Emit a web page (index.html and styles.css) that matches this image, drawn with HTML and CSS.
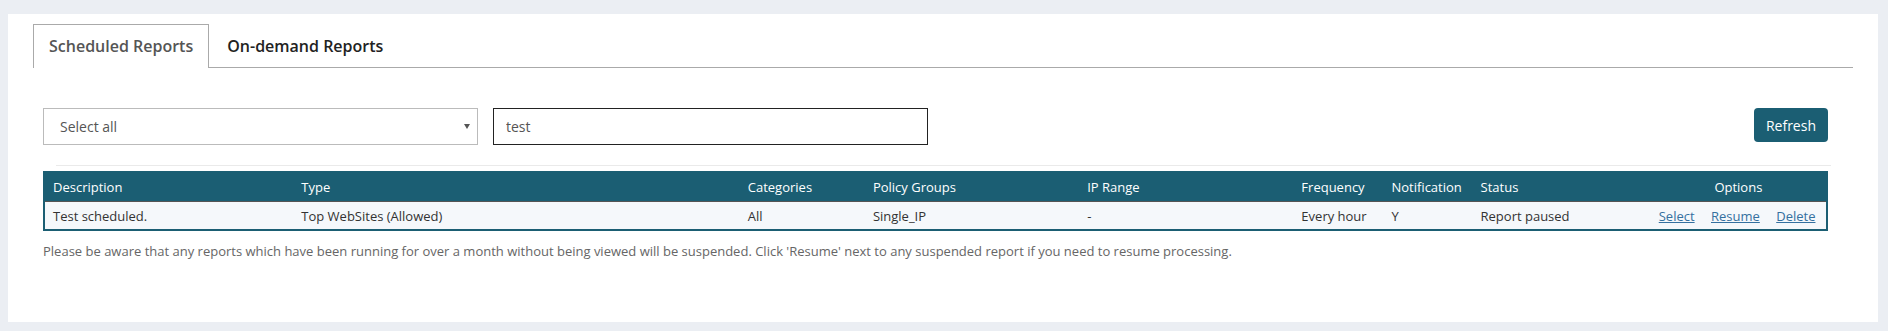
FILE: index.html
```html
<!DOCTYPE html>
<html lang="en">
<head>
    <meta charset="UTF-8">
    <meta name="viewport" content="width=device-width, initial-scale=1.0">
    <title>Reports</title>
    <link rel="stylesheet" href="styles.css">
</head>
<body>
    <div class="panel">
        <ul class="tabs">
            <li class="tab active">Scheduled Reports</li>
            <li class="tab">On-demand Reports</li>
        </ul>

        <div class="tab-content">
            <div class="filters">
                <div class="select-wrap">
                    <select class="field">
                        <option>Select all</option>
                    </select>
                </div>
                <input type="text" class="field search" value="test">
                <button class="btn">Refresh</button>
            </div>
            <hr class="sep">

            <table class="reports">
                <colgroup>
                    <col style="width: 249px">
                    <col style="width: 446px">
                    <col style="width: 125px">
                    <col style="width: 214px">
                    <col style="width: 214px">
                    <col style="width: 90px">
                    <col style="width: 89px">
                    <col style="width: 178px">
                    <col style="width: 176px">
                </colgroup>
                <thead>
                    <tr>
                        <th>Description</th>
                        <th>Type</th>
                        <th>Categories</th>
                        <th>Policy Groups</th>
                        <th>IP Range</th>
                        <th>Frequency</th>
                        <th>Notification</th>
                        <th>Status</th>
                        <th class="center">Options</th>
                    </tr>
                </thead>
                <tbody>
                    <tr>
                        <td>Test scheduled.</td>
                        <td>Top WebSites (Allowed)</td>
                        <td>All</td>
                        <td>Single_IP</td>
                        <td>-</td>
                        <td>Every hour</td>
                        <td>Y</td>
                        <td>Report paused</td>
                        <td class="options">
                            <a href="#">Select</a>
                            <a href="#">Resume</a>
                            <a href="#">Delete</a>
                        </td>
                    </tr>
                </tbody>
            </table>

            <p class="note">Please be aware that any reports which have been running for over a month without being viewed will be suspended. Click 'Resume' next to any suspended report if you need to resume processing.</p>
        </div>
    </div>
</body>
</html>
```

FILE: styles.css
```css
body {
    margin: 0;
    padding: 14px 10px 9px 8px;
    background: #ebeef3;
    font-family: "Open Sans", "Liberation Sans", sans-serif;
    font-size: 13px;
    color: #333;
}
.panel {
    background: #fff;
    height: 308px;
    box-sizing: border-box;
    padding: 10px 25px 0 25px;
}
.tabs {
    display: flex;
    list-style: none;
    margin: 0;
    padding: 0;
    border-bottom: 1px solid #aaa;
}
.tab {
    font-size: 16px;
    font-weight: 600;
    line-height: 20px;
    padding: 11px 15px;
    margin-right: 2px;
    margin-bottom: -1px;
    border: 1px solid transparent;
    border-bottom: 0;
    color: #222;
}
.tab.active {
    color: #555;
    background: #fff;
    border-color: #aaa;
    padding-bottom: 12px;
}
.tab-content {
    padding: 40px 25px 0 10px;
}
.filters {
    display: flex;
    align-items: flex-start;
    gap: 15px;
}
.field {
    width: 435px;
    height: 37px;
    box-sizing: border-box;
    border: 1px solid #bbb;
    background: #fff;
    font-family: inherit;
    font-size: 14px;
    color: #555;
    padding: 0 16px;
    outline: none;
    border-radius: 0;
}
select.field {
    appearance: none;
    -webkit-appearance: none;
}
.select-wrap {
    position: relative;
}
.select-wrap::after {
    content: "";
    position: absolute;
    right: 8px;
    top: 16px;
    border-left: 3px solid transparent;
    border-right: 3px solid transparent;
    border-top: 5px solid #555;
}
.search {
    border-color: #222;
    padding: 0 12px;
}
.btn {
    margin-left: auto;
    height: 34px;
    padding: 0 12px;
    background: #1b5e73;
    color: #fff;
    border: 0;
    border-radius: 4px;
    font-family: inherit;
    font-size: 14px;
}
.sep {
    border: 0;
    border-top: 1px solid #eaeaea;
    margin: 20px -3px 5px 13px;
}
.reports {
    width: 100%;
    border-collapse: collapse;
    table-layout: fixed;
    border: 2px solid #1b5e73;
}
.reports th {
    background: #1b5e73;
    color: #fff;
    font-weight: normal;
    text-align: left;
    height: 28px;
    padding: 0 8px;
    border-bottom: 1px solid #555;
}
.reports td {
    background: #f5f8fb;
    height: 27px;
    padding: 0 8px;
}
.reports .center {
    text-align: center;
}
.options a {
    color: #34709f;
    margin-right: 13px;
}
.options a:last-child {
    margin-right: 0;
}
.note {
    margin: 11px 0 0;
    line-height: 18px;
    color: #666;
}
```
